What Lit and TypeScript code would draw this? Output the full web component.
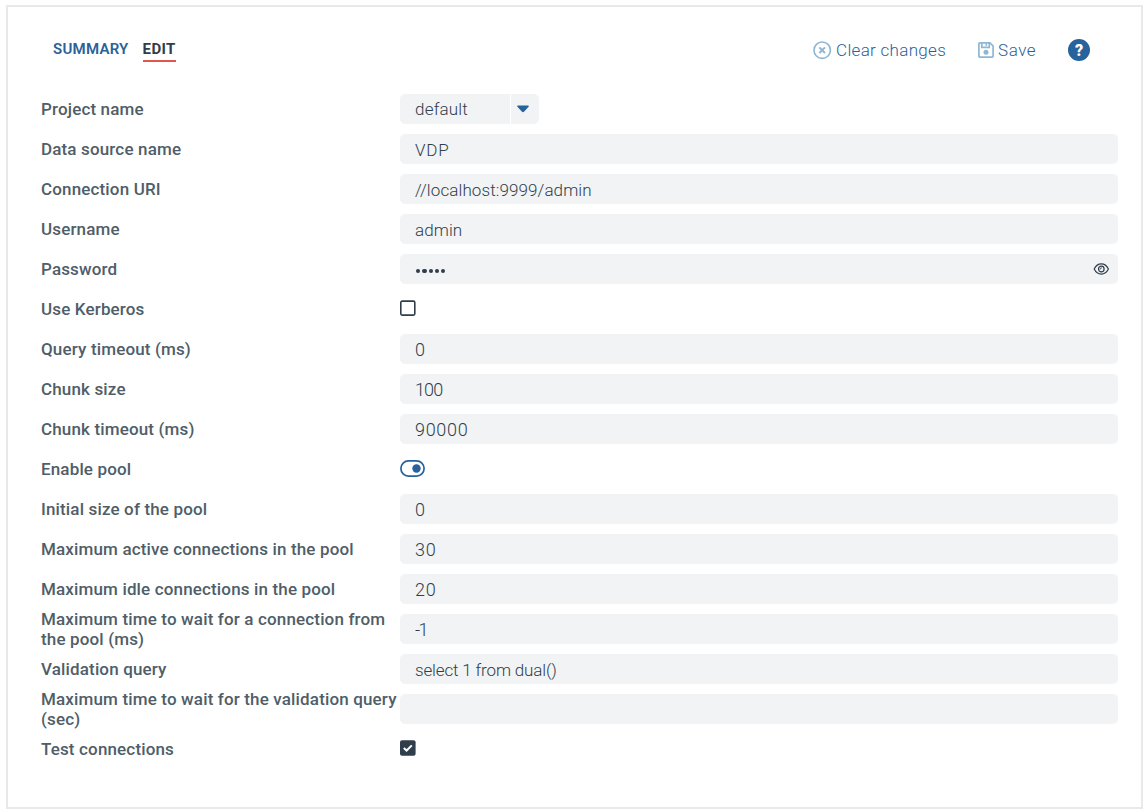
import { LitElement, css, html, svg } from 'lit';
import { customElement, property } from 'lit/decorators.js';
import { classMap } from 'lit/directives/class-map.js';
import { styleMap } from 'lit/directives/style-map.js';

type Kind = 'select' | 'text' | 'number' | 'password' | 'checkbox' | 'toggle';

interface Field {
  label: string;
  kind: Kind;
  value?: string;
  checked?: boolean;
  tracking?: number;
}

const FIELDS: Field[] = [
  { label: 'Project name', kind: 'select', value: 'default' },
  { label: 'Data source name', kind: 'text', value: 'VDP', tracking: 0.8 },
  { label: 'Connection URI', kind: 'text', value: '//localhost:9999/admin', tracking: 0.1 },
  { label: 'Username', kind: 'text', value: 'admin', tracking: 0.1 },
  { label: 'Password', kind: 'password', value: 'admin' },
  { label: 'Use Kerberos', kind: 'checkbox', checked: false },
  { label: 'Query timeout (ms)', kind: 'number', value: '0' },
  { label: 'Chunk size', kind: 'number', value: '100', tracking: -0.9 },
  { label: 'Chunk timeout (ms)', kind: 'number', value: '90000' },
  { label: 'Enable pool', kind: 'toggle', checked: true },
  { label: 'Initial size of the pool', kind: 'number', value: '0' },
  { label: 'Maximum active connections in the pool', kind: 'number', value: '30' },
  { label: 'Maximum idle connections in the pool', kind: 'number', value: '20' },
  { label: 'Maximum time to wait for a connection from the pool (ms)', kind: 'number', value: '-1', tracking: -1.6 },
  { label: 'Validation query', kind: 'text', value: 'select 1 from dual()', tracking: -0.15 },
  { label: 'Maximum time to wait for the validation query (sec)', kind: 'text', value: '' },
  { label: 'Test connections', kind: 'checkbox', checked: true },
];

@customElement('form-field')
class FormField extends LitElement {
  @property({ attribute: false }) field!: Field;

  static styles = css`
    :host {
      display: grid;
      grid-template-columns: 359px 718px;
      align-items: center;
      height: 40px;
    }

    .label {
      color: #4f5e68;
      font-size: 17px;
      font-weight: 500;
      line-height: 20px;
      letter-spacing: 0.15px;
    }

    .box {
      display: flex;
      align-items: center;
      box-sizing: border-box;
      height: 30px;
      padding: 2px 9px 0 15px;
      border-radius: 5px;
      background: #f2f3f5;
      color: #2f3e4a;
      font-size: 17px;
      font-weight: 300;
      letter-spacing: 0.2px;
      white-space: pre;
    }

    .box.number {
      padding-top: 0;
      font-size: 18px;
      letter-spacing: 0.7px;
    }

    .box.password {
      justify-content: space-between;
      padding-top: 0;
    }

    .dots {
      display: flex;
      gap: 2px;
      padding: 4px 0 0 1px;
    }

    .dot {
      width: 4.3px;
      height: 4.3px;
      border-radius: 50%;
      background: #2f3e4a;
    }

    .select {
      display: flex;
      gap: 1px;
      width: 139px;
      height: 30px;
      border-radius: 5px;
      overflow: hidden;
    }

    .select .box {
      width: 110px;
      padding-top: 0;
      border-radius: 0;
    }

    .arrow {
      display: flex;
      flex: 1;
      align-items: center;
      justify-content: center;
      padding-right: 4px;
      background: #f2f3f5;
    }

    svg {
      display: block;
    }

    .check {
      margin-top: -2px;
    }

    .toggle {
      margin-top: -1px;
    }
  `;

  renderControl() {
    const { kind, value, checked, tracking } = this.field;
    switch (kind) {
      case 'select':
        return html`
          <div class="select">
            <div class="box">${value}</div>
            <div class="arrow">
              <svg width="12" height="8" viewBox="0 0 12 8">
                <path fill="#26629c" d="M0.9 0.5h10.2q1.1 0.2 0.5 1.2L7 6.8q-1 0.9-2 0L0.4 1.7Q-0.2 0.7 0.9 0.5z" />
              </svg>
            </div>
          </div>
        `;
      case 'password':
        return html`
          <div class="box password">
            <span class="dots">${[...(value ?? '')].map(() => html`<i class="dot"></i>`)}</span>
            <svg width="16" height="14" viewBox="0 0 16 14" fill="none" stroke="#2f3e4a">
              <path stroke-width="1.2" d="M1.2 7C2.8 3.7 5.3 1.9 8.3 1.9S13.8 3.7 15.4 7C13.8 10.3 11.3 12.1 8.3 12.1S2.8 10.3 1.2 7z" />
              <circle cx="8.3" cy="7" r="2.8" stroke-width="1.2" />
              <path stroke-width="1" d="M6.8 7.2Q8.2 7.3 8.2 5.4" />
            </svg>
          </div>
        `;
      case 'checkbox':
        return html`
          <svg class="check" width="16" height="16" viewBox="0 0 16 16">
            ${checked
              ? svg`<rect y="0.2" width="15.6" height="15.6" rx="2" fill="#2f3e4a" />
                  <path d="M3.8 7.9l2.8 2.6 5.2-5.1" fill="none" stroke="#fff" stroke-width="2" />`
              : svg`<rect x="0.8" y="1.1" width="14" height="14" rx="1.3" fill="none" stroke="#2f3e4a" stroke-width="1.6" />`}
          </svg>
        `;
      case 'toggle':
        return html`
          <svg class="toggle" width="25" height="17" viewBox="0 0 25 17">
            <rect x="0.9" y="0.9" width="23.2" height="15.2" rx="7.6" fill="none" stroke="#26629c" stroke-width="1.7" />
            <circle cx="16.5" cy="8.5" r="4.2" fill="#26629c" />
          </svg>
        `;
      default:
        return html`
          <div
            class=${classMap({ box: true, number: kind === 'number' })}
            style=${styleMap(tracking === undefined ? {} : { letterSpacing: `${tracking}px` })}
          >${value}</div>
        `;
    }
  }

  render() {
    return html`
      <div class="label">${this.field.label}</div>
      ${this.renderControl()}
    `;
  }
}

@customElement('app-root')
class AppRoot extends LitElement {
  static styles = css`
    :host {
      display: block;
      box-sizing: border-box;
      height: 812px;
      padding: 5px 4px 3px 6px;
      background: #fff;
      font-family: Roboto, 'Liberation Sans', sans-serif;
    }

    .panel {
      box-sizing: border-box;
      height: 804px;
      padding: 27px 0 0 33px;
      border: 2px solid #e8e9ea;
    }

    .header {
      display: flex;
      align-items: flex-start;
      justify-content: space-between;
      height: 55px;
      padding: 0 51px 0 12px;
    }

    .tabs {
      display: flex;
      gap: 14px;
      padding-top: 6px;
      font-size: 15px;
      font-weight: 600;
      line-height: 18px;
      letter-spacing: 0.25px;
    }

    .tab {
      height: 20px;
      color: #2b619b;
    }

    .tab.active {
      border-bottom: 2px solid #e2574c;
      color: #2f3e4a;
      font-weight: 700;
      letter-spacing: 0.4px;
    }

    .actions {
      display: flex;
      align-items: center;
      height: 32px;
      color: #2b5f9a;
      font-size: 17px;
      font-weight: 300;
    }

    .action {
      display: flex;
      align-items: center;
      gap: 4px;
      margin-right: 32px;
      letter-spacing: 0.3px;
    }

    .action.save {
      letter-spacing: 0.5px;
    }

    .help {
      display: flex;
      align-items: center;
      justify-content: center;
      width: 22px;
      height: 22px;
      border-radius: 50%;
      background: #26629c;
      color: #fff;
      font-size: 16px;
      font-weight: 900;
    }
  `;

  render() {
    return html`
      <div class="panel">
        <div class="header">
          <div class="tabs">
            <div class="tab">SUMMARY</div>
            <div class="tab active">EDIT</div>
          </div>
          <div class="actions">
            <div class="action">
              <svg width="19" height="19" viewBox="0 0 19 19" fill="none" stroke="#8fb7d3">
                <circle cx="9.2" cy="9.2" r="8.2" stroke-width="1.6" />
                <path stroke-width="2" d="M6.4 6.4l5.6 5.6M12 6.4l-5.6 5.6" />
              </svg>
              <span>Clear changes</span>
            </div>
            <div class="action save">
              <svg width="16" height="16" viewBox="0 0 16 16" fill="none" stroke="#8fb7d3" stroke-width="1.7">
                <path d="M1.9 0.9H12L15.1 4V14.1Q15.1 15.1 14.1 15.1H1.9Q0.9 15.1 0.9 14.1V1.9Q0.9 0.9 1.9 0.9z" />
                <path d="M3.8 1V5.3H11.3V1" />
                <path d="M8.3 1.5V3.8" />
                <circle cx="8" cy="10.3" r="2.5" fill="#8fb7d3" stroke="none" />
              </svg>
              <span>Save</span>
            </div>
            <div class="help">?</div>
          </div>
        </div>
        ${FIELDS.map((field) => html`<form-field .field=${field}></form-field>`)}
      </div>
    `;
  }
}
